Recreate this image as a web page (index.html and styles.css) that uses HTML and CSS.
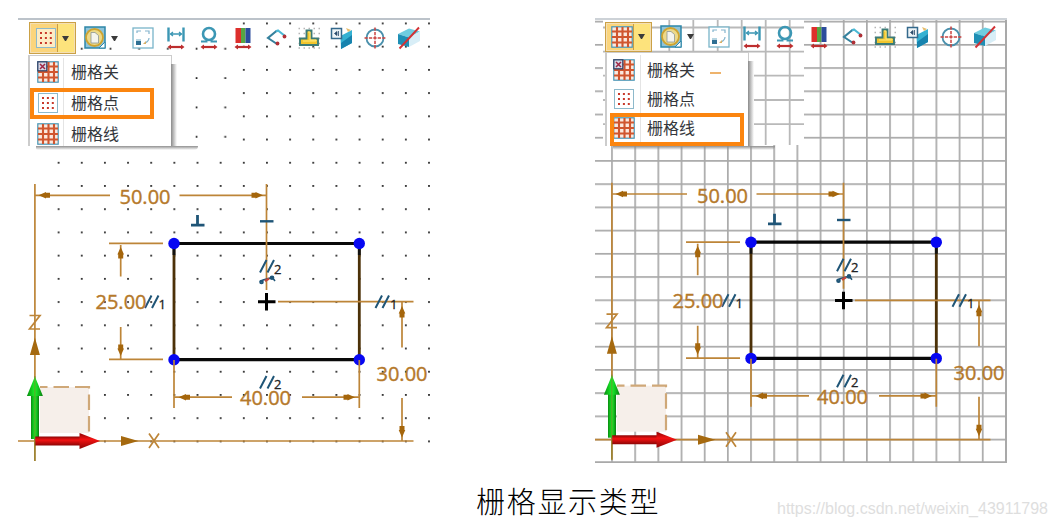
FILE: index.html
```html
<!doctype html>
<html lang="zh">

<head>
    <meta charset="utf-8">
    <title>栅格显示类型</title>
    <link rel="stylesheet" href="styles.css">
</head>

<body>
    <!-- shared icons and the sketch itself -->
    <svg class="defs" width="0" height="0">
        <defs>
            <symbol id="i-points" viewBox="0 0 22 22">
                <rect x="1.5" y="1.5" width="19" height="19" fill="#fff" fill-opacity=".55" stroke="#8db9cb" />
                <path d="M5 6h12M5 11h12M5 16h12" stroke="#c8392b" stroke-width="2" stroke-dasharray="2 2.9" fill="none" />
            </symbol>
            <symbol id="i-lines" viewBox="0 0 22 22">
                <rect x=".8" y=".8" width="20.4" height="20.4" fill="#fbe9df" stroke="#4794b4" stroke-width="1.2" />
                <path d="M6 1v20M11.500 1v20M17 1v20M1 5.500h20M1 11h20M1 16.500h20" stroke="#d0562f" stroke-width="2.100" fill="none" />
            </symbol>
            <symbol id="i-off" viewBox="0 0 22 22">
                <use href="#i-lines" width="22" height="22" />
                <rect x=".8" y=".8" width="9" height="9" fill="#d5d9e6" stroke="#34466b" stroke-width="1.300" />
                <path d="M3 3l5 5M8 3l-5 5" stroke="#a02645" stroke-width="1.500" />
            </symbol>
            <symbol id="i-shade" viewBox="0 0 24 24">
                <rect x="2" y="1" width="20" height="21" fill="#8fc4da" stroke="#2e86a8" stroke-width="1.500" />
                <path d="M16 22l6-6v6z" fill="#fff" stroke="#2e86a8" />
                <circle cx="11.500" cy="11.500" r="8.500" fill="#ecd98a" stroke="#cfa430" stroke-width="1.800" />
                <path d="M8 6.500h4l3.500 3V17H8z" fill="#f4f4ee" stroke="#8d9796" stroke-width=".8" />
            </symbol>
            <symbol id="i-view" viewBox="0 0 24 24">
                <rect x="2" y="2" width="20" height="20" fill="#fff" stroke="#79b4c9" stroke-width="1.300" />
                <path d="M6 7V5h4M14 5h4v3M18 12c0 3-2 4-4 5" fill="none" stroke="#83b4cd" stroke-width="1.200" />
                <path d="M12 18l3-3v3z" fill="#d8b066" />
                <rect x="5" y="13" width="5" height="6" fill="#2e6f93" />
                <path d="M5 13h5v2H5z" fill="#b6d5e2" />
            </symbol>
            <symbol id="i-span" viewBox="0 0 24 24">
                <path d="M4.500 1.500v14M19.500 1.500v14" stroke="#3c97b4" stroke-width="2.400" />
                <path d="M6 8h12M9 6L6.500 8 9 10M15 6l2.500 2L15 10" fill="none" stroke="#3c97b4" stroke-width="1.300" />
                <use href="#red-span" />
            </symbol>
            <g id="red-span">
                <path d="M5 21h14" stroke="#bd2e2e" stroke-width="2.200" />
                <path d="M3.500 21l3.500-2.500v5zM20.500 21l-3.500-2.500v5z" fill="#bd2e2e" />
            </g>
            <symbol id="i-round" viewBox="0 0 24 24">
                <circle cx="12" cy="8" r="6" fill="none" stroke="#3c97b4" stroke-width="2.600" />
                <path d="M4 15.500h5.500v-2M20 15.500h-5.500v-2" fill="none" stroke="#3c97b4" stroke-width="2" />
                <use href="#red-span" />
            </symbol>
            <symbol id="i-color" viewBox="0 0 24 24">
                <path d="M4.500 2h5.500v15H4.500z" fill="#dd2f2c" />
                <path d="M10 2h4.500v15H10z" fill="#57a642" />
                <path d="M14.500 2h5v15h-5z" fill="#2c4d9c" />
                <use href="#red-span" />
            </symbol>
            <symbol id="i-chain" viewBox="0 0 24 24">
                <path d="M13 4.500L4 12l9 6" fill="none" stroke="#35819d" stroke-width="2.100" />
                <path d="M12 5.500l2-1 7 5.500" fill="none" stroke="#4bb8d4" stroke-width="2.100" />
                <circle cx="20.500" cy="10.500" r="1.900" fill="#b03137" />
                <circle cx="13.500" cy="17.500" r="1.900" fill="#b03137" />
            </symbol>
            <symbol id="i-stamp" viewBox="0 0 24 24">
                <path d="M1.500 2.500h22M1.500 7.500h22M1.500 12.500h22M1.500 17.500h22M1.500 22h22" stroke="#b5b5b5" stroke-width="1.300" stroke-dasharray="1.500 3.500" />
                <path d="M9.500 4.500h5v8h6.500v6.500H3V12.500h6.500z" fill="#f1c52d" stroke="#3c7b77" stroke-width="1.900" />
                <path d="M11 6h2v8h6v1H6" fill="none" stroke="#ffe878" />
            </symbol>
            <symbol id="i-plane" viewBox="0 0 24 24">
                <path d="M10.500 10L22 4v13L11 23z" fill="#35b1d2" />
                <path d="M11 17l11-8v8L11 23z" fill="#1783ae" />
                <path d="M16 2l5 2-3 2z" fill="#e7bd6c" />
                <rect x="1.500" y="2.500" width="10" height="10" fill="#eef4f7" stroke="#34698c" stroke-width="1.500" />
                <path d="M4.500 7.500L7 5.500v4zM8.500 5v5" fill="#2b4b6c" stroke="#2b4b6c" stroke-width=".8" />
            </symbol>
            <symbol id="i-target" viewBox="0 0 24 24">
                <circle cx="12" cy="12" r="8.500" fill="none" stroke="#4a90ac" stroke-width="1.800" />
                <path d="M12 1.500v21M1.500 12h21" stroke="#cb4340" stroke-width="1.500" stroke-dasharray="3.300 1.100" />
            </symbol>
            <symbol id="i-cut" viewBox="0 0 24 24">
                <path d="M1 8l11-5.500 11 3-11 6z" fill="#6fcde0" />
                <path d="M1 8l11 3.500V21L1 18z" fill="#1e8fb5" />
                <path d="M12 11.500l11-6V15l-11 6z" fill="#d8eef7" />
                <path d="M2.500 22.500L22 1.500" stroke="#d23235" stroke-width="1.900" />
            </symbol>

            <pattern id="dots" x="47.050" y="174.400" width="23.150" height="23.220" patternUnits="userSpaceOnUse">
                <rect x="10.700" y="10.700" width="1.700" height="1.700" fill="#111" />
            </pattern>
            <pattern id="dots-wide" x="67.300" y="34" width="28.700" height="29.350" patternUnits="userSpaceOnUse">
                <rect x="13.600" y="13.900" width="1.700" height="1.700" fill="#111" />
            </pattern>
            <pattern id="grid" x="23.500" y="10.100" width="23.170" height="23.220" patternUnits="userSpaceOnUse">
                <path d="M11.500 0v23.300M0 11.600h23.300" stroke="#a9a9a9" stroke-width="1.700" />
            </pattern>
            <linearGradient id="green" x2="1" y2="0">
                <stop offset="0" stop-color="#0a8a10" />
                <stop offset=".5" stop-color="#19f52a" />
                <stop offset="1" stop-color="#0a7d10" />
            </linearGradient>
            <linearGradient id="red" x2="0" y2="1">
                <stop offset="0" stop-color="#8c0505" />
                <stop offset=".4" stop-color="#f31212" />
                <stop offset="1" stop-color="#8c0505" />
            </linearGradient>
            <path id="head" d="M0 0l7.500-3.300 0 .8h4v5h-4v.8z" fill="#a5660c" />

            <g id="sketch" fill="none">
                <rect x="40" y="387" width="49" height="46" fill="#f6efea" />
                <path d="M40 387h49v46" stroke="#cfa878" stroke-width="2.200" stroke-dasharray="15.500 6" stroke-dashoffset="8" />
                <!-- rectangle -->
                <path d="M174 243.500h185M174 359.700h185" stroke="#090909" stroke-width="3.200" />
                <path d="M174 243v117M359.300 243v117" stroke="#4c3108" stroke-width="2.800" />
                <path d="M174 243v12M359.300 243v12" stroke="#111" stroke-width="2.800" />
                <g fill="#0707f2">
                    <circle cx="174" cy="243.500" r="5.700" />
                    <circle cx="359.300" cy="243.500" r="5.700" />
                    <circle cx="174" cy="359.700" r="5.700" />
                    <circle cx="359.300" cy="359.700" r="5.700" />
                </g>
                <!-- dimension lines -->
                <g stroke="#bd8538" stroke-width="1.700">
                    <path d="M34.900 184v277M18 441h395.500" />
                    <path d="M35 195.300h75M179.500 195.300h87M266.500 184v106" />
                    <path d="M109 243.400h54M109 359.400h54M120.700 245v31.500M120.700 327v32" />
                    <path d="M174 360v48M359.300 360v48M174 397.200h58M302 397.200h57" />
                    <path d="M278 301.700h135.500M402 302v45.500M402 398v43" />
                </g>
                <use href="#head" x="38.500" y="195.300" />
                <use href="#head" transform="translate(263 195.300) rotate(180)" />
                <use href="#head" x="178.500" y="397.200" />
                <use href="#head" transform="translate(355 397.200) rotate(180)" />
                <use href="#head" transform="translate(120.700 247) rotate(90)" />
                <use href="#head" transform="translate(120.700 356) rotate(-90)" />
                <use href="#head" transform="translate(402 306) rotate(90)" />
                <use href="#head" transform="translate(402 437.500) rotate(-90)" />
                <!-- axes -->
                <path d="M34.900 337.500l5 17.500h-10zM138.500 441l-17.500-5v10z" fill="#a5690f" />
                <path d="M29.500 315.500h10.500l-10.500 13.500h10.500M149 433.500l10 14.500M159 433.500l-10 14.500" stroke="#bd8538" stroke-width="1.700" />
                <path d="M31 395h8v44h-8z" fill="url(#green)" />
                <path d="M34.900 376.500l8 19.500h-16z" fill="url(#green)" />
                <path d="M35 436.500h45v9H35z" fill="url(#red)" />
                <path d="M100 441l-20.500 8v-16z" fill="url(#red)" />
                <path d="M34.900 376v85" stroke="#7a812b" stroke-width=".8" />
                <!-- constraint marks -->
                <g stroke="#1f5577" stroke-width="2">
                    <path d="M197.500 215v11M191 225.200h13.500" stroke-width="2.800" />
                    <path d="M260 221.300h13.500" stroke-width="2.400" />
                    <path d="M145 308l6.500-12.500M152 308l6.500-12.500" />
                    <path d="M375.500 308l6.500-12.500M382.500 308l6.500-12.500" />
                    <path d="M260 272.500l6.500-12.500M267.500 272.500l6.500-12.500" />
                    <path d="M260 388.500l6.500-12.500M267.500 388.500l6.500-12.500" />
                    <path d="M260 282l3-2 11-3M272 277l3 4" stroke-width="1.600" />
                    <circle cx="261.500" cy="282" r="1.300" />
                    <circle cx="272" cy="277.700" r="1.300" />
                </g>
                <path d="M265 281l4-2.500" stroke="#c2463c" stroke-width="2.500" />
                <path d="M266.500 293v17.500M258 301.700h17.500" stroke="#000" stroke-width="3" />
            </g>
        </defs>
    </svg>

    <div class="figures">
        <div class="panel">
            <svg class="canvas" viewBox="18 18 412 445">
                <rect x="47" y="151" width="383" height="300" fill="url(#dots)" />
                <rect x="232" y="21" width="198" height="130" fill="url(#dots)" />
                <rect x="67" y="34" width="165" height="117" fill="url(#dots-wide)" />
                <use href="#sketch" />
                <text class="dim" x="119.500" y="203.500">50.00</text>
                <text class="dim" x="95.500" y="309">25.00</text>
                <text class="dim" x="240" y="405">40.00</text>
                <text class="dim" x="376.500" y="381">30.00</text>
                <text class="mark" x="158.500" y="309">1</text>
                <text class="mark" x="390" y="309">1</text>
                <text class="mark" x="274" y="273.500">2</text>
                <text class="mark" x="274" y="388.500">2</text>
            </svg>
            <div class="toolbar">
                <div class="split">
                    <svg class="icon-sm"><use href="#i-points" /></svg>
                    <span class="arrow"></span>
                </div>
                <div class="drop">
                    <svg class="icon"><use href="#i-shade" /></svg>
                    <span class="arrow"></span>
                </div>
                <div class="tools">
                    <svg class="icon"><use href="#i-view" /></svg>
                    <svg class="icon"><use href="#i-span" /></svg>
                    <svg class="icon"><use href="#i-round" /></svg>
                    <svg class="icon"><use href="#i-color" /></svg>
                    <svg class="icon"><use href="#i-chain" /></svg>
                    <svg class="icon"><use href="#i-stamp" /></svg>
                    <svg class="icon"><use href="#i-plane" /></svg>
                    <svg class="icon"><use href="#i-target" /></svg>
                    <svg class="icon"><use href="#i-cut" /></svg>
                </div>
            </div>
            <div class="menu">
                <div class="item"><svg class="icon-sm"><use href="#i-off" /></svg><span>栅格关</span></div>
                <div class="item"><svg class="icon-sm"><use href="#i-points" /></svg><span>栅格点</span></div>
                <div class="item"><svg class="icon-sm"><use href="#i-lines" /></svg><span>栅格线</span></div>
                <div class="picked"></div>
            </div>
        </div>

        <div class="panel panel-lines">
            <svg class="canvas" viewBox="18 18 412 445">
                <rect x="18" y="20" width="412" height="443" fill="url(#grid)" />
                <path d="M429.300 20v443M18 462.200h412" stroke="#a9a9a9" stroke-width="1.700" />
                <!-- the toolbar sits on a slightly coarser grid -->
                <rect x="26" y="20" width="201" height="125" fill="#fff" />
                <path d="M92.300 20v125M116.300 20v125M140.700 20v125M164.700 20v125M188.700 20v125M212.700 20v125M26 27.500h201M26 51.700h201M26 75.700h201M26 100h201M26 124.200h201" stroke="#b9b9b9" stroke-width="1.800" />
                <use href="#sketch" y="-1.300" />
                <text class="dim" x="120" y="202.500">50.00</text>
                <text class="dim" x="95.500" y="308">25.00</text>
                <text class="dim" x="240" y="403.500">40.00</text>
                <text class="dim" x="376.500" y="380">30.00</text>
                <text class="mark" x="158.500" y="307.500">1</text>
                <text class="mark" x="390" y="307.500">1</text>
                <text class="mark" x="274" y="272">2</text>
                <text class="mark" x="274" y="387">2</text>
            </svg>
            <div class="toolbar">
                <div class="split">
                    <svg class="icon-sm"><use href="#i-lines" /></svg>
                    <span class="arrow"></span>
                </div>
                <div class="drop">
                    <svg class="icon"><use href="#i-shade" /></svg>
                    <span class="arrow"></span>
                </div>
                <div class="tools">
                    <svg class="icon"><use href="#i-view" /></svg>
                    <svg class="icon"><use href="#i-span" /></svg>
                    <svg class="icon"><use href="#i-round" /></svg>
                    <svg class="icon"><use href="#i-color" /></svg>
                    <svg class="icon"><use href="#i-chain" /></svg>
                    <svg class="icon"><use href="#i-stamp" /></svg>
                    <svg class="icon"><use href="#i-plane" /></svg>
                    <svg class="icon"><use href="#i-target" /></svg>
                    <svg class="icon"><use href="#i-cut" /></svg>
                </div>
            </div>
            <div class="menu">
                <div class="item"><svg class="icon-sm"><use href="#i-off" /></svg><span>栅格关</span><i class="dash"></i></div>
                <div class="item"><svg class="icon-sm"><use href="#i-points" /></svg><span>栅格点</span></div>
                <div class="item"><svg class="icon-sm"><use href="#i-lines" /></svg><span>栅格线</span></div>
                <div class="picked"></div>
            </div>
        </div>
    </div>

    <div class="footer">
        <div class="caption">栅格显示类型</div>
        <div class="watermark">https://blog.csdn.net/weixin_43911798</div>
    </div>
</body>

</html>
```
FILE: styles.css
```css
* {
    box-sizing: border-box;
}

body {
    margin: 0;
    background: #fff;
    overflow: hidden;
    font-family: "Liberation Sans", "Noto Sans CJK SC", sans-serif;
}

svg {
    display: block;
}

.defs {
    position: absolute;
}

.figures {
    display: flex;
    gap: 165px;
    padding: 18px 0 0 18px;
}

.panel {
    position: relative;
    width: 412px;
    height: 445px;
    border-top: 2px solid #bcc3ca;
}

.panel-lines {
    border-top-color: #cdd2d7;
}

.canvas {
    position: absolute;
    left: 0;
    top: -2px;
    width: 412px;
    height: 445px;
}

.dim {
    font: 20px "Open Sans", sans-serif;
    fill: #b5792b;
    stroke: #b5792b;
    stroke-width: 0.4px;
}

.mark {
    font: 13px "Open Sans", sans-serif;
    fill: #222;
    stroke: #222;
    stroke-width: 0.3px;
}

.toolbar {
    position: relative;
    display: flex;
    align-items: center;
    height: 32px;
    margin: 2px 0 0 11px;
}

.panel-lines .toolbar {
    height: 31px;
    margin: 1px 0 0 10px;
}

.split {
    display: flex;
    align-items: center;
    width: 47px;
    height: 32px;
    padding-left: 5px;
    background: linear-gradient(90deg, #fbd57c 27px, #c99c45 27px, #c99c45 28px, #fde37c 28px);
    border: 1px solid #cba146;
    outline: 1px solid #f4dfb4;
    outline-offset: -2px;
}

.split .arrow {
    margin-left: 5px;
}

.panel-lines .split {
    height: 30px;
}

.icon {
    width: 24px;
    height: 24px;
    flex: none;
}

.icon-sm {
    width: 22px;
    height: 22px;
    flex: none;
}

.arrow {
    width: 7px;
    height: 5px;
    border: solid transparent;
    border-width: 5px 3.5px 0;
    border-top-color: #3b3b3b;
}

.drop {
    display: flex;
    align-items: center;
    margin-left: 7px;
}

.drop .arrow {
    margin-left: 4px;
}

.tools {
    display: flex;
    gap: 9.2px;
    margin-left: 13px;
}

.menu {
    position: absolute;
    left: 10px;
    top: 35px;
    width: 144px;
    height: 91px;
    background: #fff;
    border: solid #ccc;
    border-width: 1px 1px 0 2px;
}

.menu::before {
    content: "";
    position: absolute;
    left: 33px;
    top: 2px;
    bottom: 0;
    border-left: 1px solid #e4e4e4;
}

/* drop shadow, right side */
.menu::after {
    content: "";
    position: absolute;
    left: 100%;
    top: 8px;
    bottom: 0;
    width: 6px;
    background: linear-gradient(90deg, #8a8a8a, #fff);
}

.item {
    display: flex;
    align-items: center;
    height: 31px;
    padding-left: 7px;
    color: #34373c;
    font: 16px "Noto Sans CJK SC", sans-serif;
}

.item span {
    margin: -2px 0 0 12px;
}

.picked {
    position: absolute;
    left: 0;
    top: 32px;
    width: 124px;
    height: 31px;
    border: 4px solid #fb850f;
}

/* drop shadow, bottom */
.panel::after {
    content: "";
    position: absolute;
    left: 18px;
    top: 126px;
    width: 162px;
    height: 4px;
    background: linear-gradient(#909090, rgba(255, 255, 255, 0));
    border-radius: 0 0 12px 6px;
}

.panel-lines .menu {
    top: 32px;
    height: 94px;
    padding-top: 2px;
}

.panel-lines .item {
    height: 29px;
    padding-left: 6px;
}

.panel-lines .picked {
    left: 3px;
    top: 60px;
    width: 134px;
    height: 33px;
}

.dash {
    width: 11px;
    height: 2px;
    margin: 7px 0 0 15px;
    background: #eeb36c;
}

.footer {
    display: flex;
    justify-content: space-between;
    height: 64px;
    padding: 16px 9px 0 476px;
}

.caption {
    color: #000;
    font: 300 29px/42px "Noto Sans CJK SC", sans-serif;
    letter-spacing: 1.7px;
}

.watermark {
    padding-top: 21px;
    color: #dedede;
    font-size: 16px;
    line-height: 18px;
}
```
